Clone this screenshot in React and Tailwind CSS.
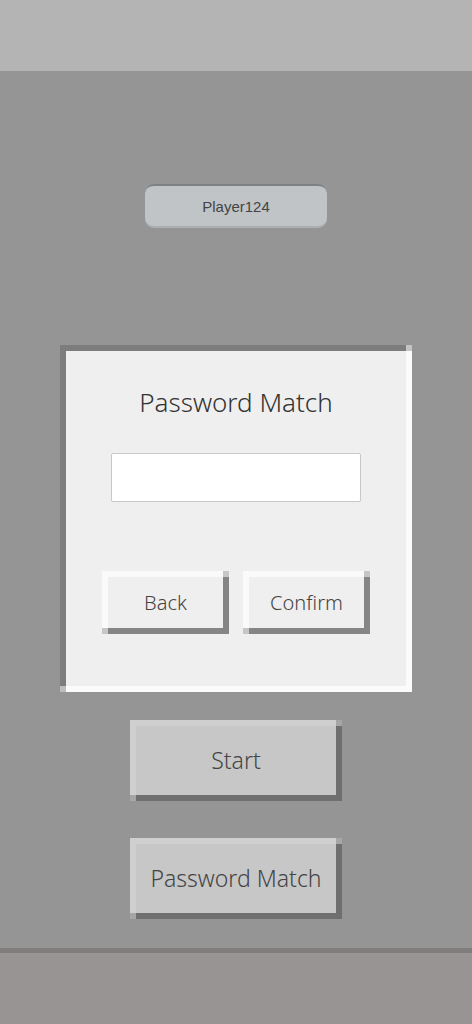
import React from "react";

const font = { fontFamily: '"Noto Sans", "Noto Sans CJK JP", sans-serif' };

function PanelButton({ label }) {
  return (
    <div className="relative w-[127px] h-[63px] bg-[#efefef] shadow-[inset_6px_6px_0_#fafafa,inset_-6px_-6px_0_#858585] flex items-center justify-center">
      <span className="absolute top-0 right-0 w-[6px] h-[6px] bg-[#c6c6c6]" />
      <span className="absolute bottom-0 left-0 w-[6px] h-[6px] bg-[#c6c6c6]" />
      <span className="text-[20px] leading-none text-[#444] font-light" style={font}>
        {label}
      </span>
    </div>
  );
}

function BigButton({ label }) {
  return (
    <div className="relative w-[212px] h-[81px] bg-[#c7c7c7] shadow-[inset_6px_6px_0_#cfcfcf,inset_-6px_-6px_0_#6f6f6f] flex items-center justify-center">
      <span className="absolute top-0 right-0 w-[6px] h-[6px] bg-[#a6a6a6]" />
      <span className="absolute bottom-0 left-0 w-[6px] h-[6px] bg-[#a6a6a6]" />
      <span className="text-[23px] leading-none text-[#444] font-light" style={font}>
        {label}
      </span>
    </div>
  );
}

export default function App() {
  return (
    <div className="w-[472px] h-[1024px] flex flex-col bg-[#959595] overflow-hidden">
      <div className="h-[71px] bg-[#b4b4b4] shrink-0" />
      <div className="flex-1 flex flex-col items-center">
        <div className="mt-[113px] w-[182px] h-[43px] rounded-[9px] bg-[#c0c4c6] border-t-[2px] border-[#7e8082] border-b border-b-[#a9adaf] shadow-[0_1px_0_#aeb2b4] flex items-center justify-center">
          <span
            className="text-[15px] leading-none text-[#444]"
            style={{ fontFamily: '"Liberation Sans", Arial, sans-serif' }}
          >
            Player124
          </span>
        </div>

        <div className="relative mt-[118px] w-[352px] h-[347px] bg-[#efefef] shadow-[inset_6px_6px_0_#7d7d7d,inset_-6px_-6px_0_#fbfbfb] flex flex-col items-center">
          <span className="absolute top-0 right-0 w-[6px] h-[6px] bg-[#c4c4c4]" />
          <span className="absolute bottom-0 left-0 w-[6px] h-[6px] bg-[#bdbdbd]" />
          <div
            className="mt-[42px] h-[30px] flex items-center text-[26px] text-[#333] font-light"
            style={font}
          >
            Password Match
          </div>
          <div className="mt-[36px] w-[250px] h-[49px] bg-white border border-[#c8c8c8] rounded-[2px]" />
          <div className="mt-[69px] flex gap-[14px]">
            <PanelButton label="Back" />
            <PanelButton label="Confirm" />
          </div>
        </div>

        <div className="mt-[28px]">
          <BigButton label="Start" />
        </div>
        <div className="mt-[37px]">
          <BigButton label="Password Match" />
        </div>
      </div>
      <div className="h-[76px] shrink-0 border-t-[5px] border-[#817d7c] bg-[#989493]" />
    </div>
  );
}
